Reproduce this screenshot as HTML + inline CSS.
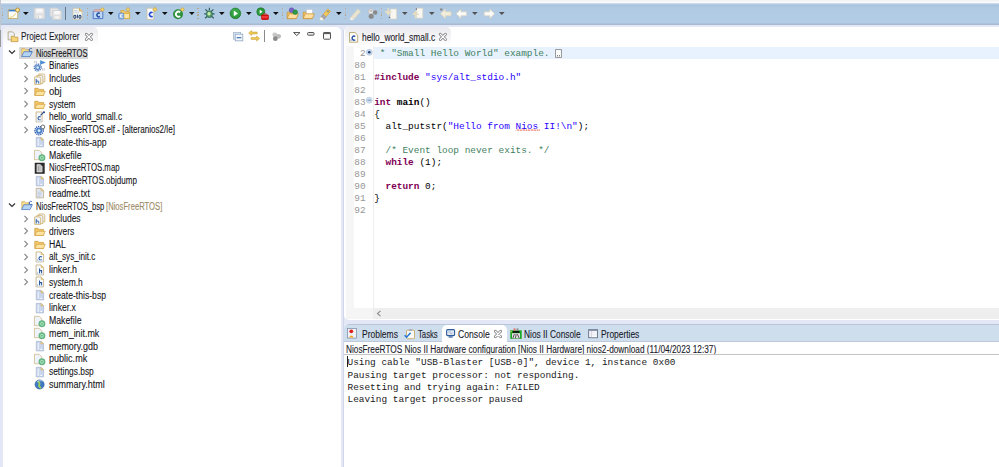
<!DOCTYPE html><html><head><meta charset="utf-8"><style>
html,body{margin:0;padding:0;}body{width:999px;height:467px;overflow:hidden;position:relative;background:#e3e7f6;font-family:"Liberation Sans", sans-serif;}
.t{position:absolute;white-space:pre;transform-origin:0 50%;-webkit-text-stroke:0.1px currentColor;font-family:"Liberation Sans", sans-serif;}
.m{position:absolute;white-space:pre;font-family:"Liberation Mono", monospace;}
.r{position:absolute;}.i{position:absolute;overflow:visible;}
</style></head><body>
<div class="r" style="left:0px;top:0px;width:999px;height:25px;background:linear-gradient(#f0f0f0 0px,#f4f5f7 1px,#fbfcfe 2.5px,#c9daec 3.5px,#aac3dd 5px,#b1cae4 8px,#b4cde7 23px,#a6b8cf 24px,#dfe4f3 25px);"></div>
<div class="r" style="left:0px;top:24px;width:999px;height:1px;background:#a9b9cf;"></div>
<div class="r" style="left:0px;top:25px;width:999px;height:2px;background:#e4e7f6;"></div>
<div class="r" style="left:1.6px;top:8.3px;width:1.2px;height:1.2px;background:#b9a17d;border-radius:1px;"></div>
<div class="r" style="left:1.6px;top:11.6px;width:1.2px;height:1.2px;background:#b9a17d;border-radius:1px;"></div>
<div class="r" style="left:1.6px;top:14.4px;width:1.2px;height:1.2px;background:#b9a17d;border-radius:1px;"></div>
<div class="r" style="left:1.6px;top:17.7px;width:1.2px;height:1.2px;background:#b9a17d;border-radius:1px;"></div>
<svg class="i" style="left:6.50px;top:7.30px" width="12.8" height="12.8" viewBox="0 0 16 16"><rect x="1.5" y="3.5" width="12" height="11" fill="#fdfdf8" stroke="#c3a65a"/><rect x="2" y="3.5" width="11" height="2" fill="#3b7fd0"/><path d="M3 13c3 0 6-2 8-5" stroke="#f0dc9a" stroke-width="1.5" fill="none"/><circle cx="13.2" cy="3.8" r="2.6" fill="#f2d57a" stroke="#b48a2c"/><circle cx="13.2" cy="3.8" r="1" fill="#fff6d0"/></svg>
<svg class="i" style="left:22.80px;top:11.8px" width="5.6" height="3" viewBox="0 0 5.6 3"><path d="M0 0h5.6L2.8 3z" fill="#101010"/></svg>
<svg class="i" style="left:32.80px;top:7.30px" width="12.8" height="12.8" viewBox="0 0 16 16"><path d="M1.5 1.5h12l1 1v12h-13z" fill="#e4e4e4" stroke="#cfcfcf"/><rect x="4" y="2" width="8" height="5" fill="#f8f8f8"/><rect x="4" y="10" width="8" height="4.5" fill="#f4f4f4" stroke="#d6d6d6" stroke-width=".8"/><rect x="6" y="11" width="1.5" height="3" fill="#d0d0d0"/></svg>
<svg class="i" style="left:49.10px;top:7.30px" width="12.8" height="12.8" viewBox="0 0 16 16"><path d="M1.5 1.5h9l1 1v9h-10z" fill="#e6e6e6" stroke="#d3d3d3"/><path d="M4.5 4.5h10l1 1v10h-11z" fill="#e4e4e4" stroke="#cfcfcf"/><rect x="6.5" y="5" width="7" height="4" fill="#f8f8f8"/><rect x="6.5" y="11" width="7" height="4" fill="#f4f4f4" stroke="#d6d6d6" stroke-width=".8"/></svg>
<div class="r" style="left:65.1px;top:7.2px;width:1.1px;height:12.4px;background:#6c7682;"></div>
<svg class="i" style="left:71.10px;top:7.30px" width="12.8" height="12.8" viewBox="0 0 16 16"><path d="M2.5 1.5h8l3.5 3.5v10.5h-11.5z" fill="#f6f6f0" stroke="#c9c1a6"/><path d="M10.5 1.5v3.5h3.5" fill="#f2cd6c" stroke="#c9a24c"/><rect x="4" y="4" width="4" height="1" fill="#b8c8e0"/><rect x="4" y="6" width="6" height="1" fill="#b8c8e0"/><path d="M4.8 10.2a1.3 2 0 1 0 .01 0M8 9.5v4.5M11.2 10.2a1.3 2 0 1 0 .01 0" fill="none" stroke="#2a4a7a" stroke-width="1.3"/></svg>
<div class="r" style="left:86.60000000000001px;top:8.3px;width:1.2px;height:1.2px;background:#b9a17d;border-radius:1px;"></div>
<div class="r" style="left:86.60000000000001px;top:11.6px;width:1.2px;height:1.2px;background:#b9a17d;border-radius:1px;"></div>
<div class="r" style="left:86.60000000000001px;top:14.4px;width:1.2px;height:1.2px;background:#b9a17d;border-radius:1px;"></div>
<div class="r" style="left:86.60000000000001px;top:17.7px;width:1.2px;height:1.2px;background:#b9a17d;border-radius:1px;"></div>
<svg class="i" style="left:91.60px;top:7.30px" width="12.8" height="12.8" viewBox="0 0 16 16"><path d="M1.5 5.5h12v9h-12z" fill="#bcd8f4" stroke="#3a62c0"/><path d="M1.5 5.5l2-2h9l1 2" fill="#f4c0b0" stroke="#c08070" stroke-width=".8"/><path d="M9.8 8.2a2.3 2.3 0 1 0 0 3.6" fill="none" stroke="#1f4aa0" stroke-width="1.8"/><path d="M13 0.5l2.5 2.5-2.5 2.5-2.5-2.5z" fill="#f2d06a" stroke="#c09a30" stroke-width=".8"/></svg>
<svg class="i" style="left:108.20px;top:11.8px" width="5.6" height="3" viewBox="0 0 5.6 3"><path d="M0 0h5.6L2.8 3z" fill="#101010"/></svg>
<svg class="i" style="left:118.30px;top:7.30px" width="12.8" height="12.8" viewBox="0 0 16 16"><path d="M3.5 4.5h4l1.5 1.5h5.5v8h-11z" fill="#f6cf6c" stroke="#d4a23a"/><path d="M3.5 8h11v6.5h-11z" fill="#ffe6a0" stroke="#d4a23a"/><rect x="0.8" y="7.5" width="6.5" height="7.5" rx="1.5" fill="#8fb4e6" stroke="#5a86c8" stroke-width=".8"/><path d="M5.5 9.6a1.7 1.7 0 1 0 0 3" fill="none" stroke="#f4f8ff" stroke-width="1.3"/><path d="M12.5 0.5l2.5 2.5-2.5 2.5-2.5-2.5z" fill="#f2d06a" stroke="#c09a30" stroke-width=".8"/></svg>
<svg class="i" style="left:134.70px;top:11.8px" width="5.6" height="3" viewBox="0 0 5.6 3"><path d="M0 0h5.6L2.8 3z" fill="#101010"/></svg>
<svg class="i" style="left:144.80px;top:7.30px" width="12.8" height="12.8" viewBox="0 0 16 16"><path d="M2.5 1.5h8.5v14h-8.5z" fill="#fbfcff" stroke="#c9bf9a"/><path d="M9.5 7.2a2.6 2.6 0 1 0 0 4.4" fill="none" stroke="#2a4ed0" stroke-width="2.1"/><path d="M12.5 0.3l2.8 2.8-2.8 2.8-2.8-2.8z" fill="#f2d06a" stroke="#c09a30" stroke-width=".8"/></svg>
<svg class="i" style="left:161.80px;top:11.8px" width="5.6" height="3" viewBox="0 0 5.6 3"><path d="M0 0h5.6L2.8 3z" fill="#101010"/></svg>
<svg class="i" style="left:171.60px;top:7.30px" width="12.8" height="12.8" viewBox="0 0 16 16"><circle cx="7.5" cy="9" r="6.2" fill="#2a8a3a"/><circle cx="7.5" cy="8.4" r="5" fill="#3aa04a" opacity=".5"/><path d="M10.2 6.6a3.2 3.2 0 1 0 0 4.8" fill="none" stroke="#ffffff" stroke-width="2.3"/><path d="M13 0.5l2.6 2.6-2.6 2.6-2.6-2.6z" fill="#f2d06a" stroke="#c09a30" stroke-width=".8"/></svg>
<svg class="i" style="left:188.60px;top:11.8px" width="5.6" height="3" viewBox="0 0 5.6 3"><path d="M0 0h5.6L2.8 3z" fill="#101010"/></svg>
<div class="r" style="left:197.4px;top:8.3px;width:1.2px;height:1.2px;background:#b9a17d;border-radius:1px;"></div>
<div class="r" style="left:197.4px;top:11.6px;width:1.2px;height:1.2px;background:#b9a17d;border-radius:1px;"></div>
<div class="r" style="left:197.4px;top:14.4px;width:1.2px;height:1.2px;background:#b9a17d;border-radius:1px;"></div>
<div class="r" style="left:197.4px;top:17.7px;width:1.2px;height:1.2px;background:#b9a17d;border-radius:1px;"></div>
<svg class="i" style="left:202.70px;top:7.30px" width="12.8" height="12.8" viewBox="0 0 16 16"><path d="M3 3l3 3M13 3l-3 3M1.5 8.5h3.5M14.5 8.5h-3.5M2.5 14l3-2.5M13.5 14l-3-2.5M8 1v3" stroke="#2f6060" stroke-width="1.5"/><ellipse cx="8" cy="9" rx="3.8" ry="4.2" fill="#5a9a6a" stroke="#2f6a5a"/><ellipse cx="7.5" cy="8.5" rx="2" ry="2.2" fill="#c8f0a8"/></svg>
<svg class="i" style="left:219.00px;top:11.8px" width="5.6" height="3" viewBox="0 0 5.6 3"><path d="M0 0h5.6L2.8 3z" fill="#101010"/></svg>
<svg class="i" style="left:229.30px;top:7.00px" width="12.8" height="12.8" viewBox="0 0 16 16"><circle cx="8" cy="8" r="6.6" fill="#2c9a3c" stroke="#237a30"/><circle cx="8" cy="7" r="5" fill="#3fb04e" opacity=".6"/><path d="M6 4.3l5.2 3.7-5.2 3.7z" fill="#ffffff"/></svg>
<svg class="i" style="left:245.70px;top:11.8px" width="5.6" height="3" viewBox="0 0 5.6 3"><path d="M0 0h5.6L2.8 3z" fill="#101010"/></svg>
<svg class="i" style="left:255.90px;top:6.90px" width="12.8" height="12.8" viewBox="0 0 16 16"><circle cx="6" cy="6" r="5" fill="#2c9a3c" stroke="#237a30"/><path d="M4.6 3.5l3.6 2.5-3.6 2.5z" fill="#fff"/><rect x="7" y="10" width="8.5" height="5.5" rx=".8" fill="#e01818" stroke="#b00"/><path d="M9.5 10v-1.5h3.5v1.5" fill="none" stroke="#c33" stroke-width="1"/><rect x="7" y="12" width="8.5" height="1" fill="#ff6a6a"/></svg>
<svg class="i" style="left:272.70px;top:11.8px" width="5.6" height="3" viewBox="0 0 5.6 3"><path d="M0 0h5.6L2.8 3z" fill="#101010"/></svg>
<div class="r" style="left:281.79999999999995px;top:8.3px;width:1.2px;height:1.2px;background:#b9a17d;border-radius:1px;"></div>
<div class="r" style="left:281.79999999999995px;top:11.6px;width:1.2px;height:1.2px;background:#b9a17d;border-radius:1px;"></div>
<div class="r" style="left:281.79999999999995px;top:14.4px;width:1.2px;height:1.2px;background:#b9a17d;border-radius:1px;"></div>
<div class="r" style="left:281.79999999999995px;top:17.7px;width:1.2px;height:1.2px;background:#b9a17d;border-radius:1px;"></div>
<svg class="i" style="left:285.60px;top:7.30px" width="12.8" height="12.8" viewBox="0 0 16 16"><path d="M1.5 6.5h4l1 1h6v7h-11z" fill="#f5c860" stroke="#c9963a"/><path d="M1.5 14.5l2.5-6h11.5l-2.5 6z" fill="#ffe0a0" stroke="#c9963a"/><circle cx="7" cy="4" r="3" fill="#7a62c8" stroke="#5a48a0" stroke-width=".6"/><circle cx="11.5" cy="6.5" r="3" fill="#2e9a48" stroke="#1f7a38" stroke-width=".6"/></svg>
<svg class="i" style="left:301.80px;top:7.30px" width="12.8" height="12.8" viewBox="0 0 16 16"><path d="M1.5 6.5h4l1 1h6v7h-11z" fill="#f5c860" stroke="#c9963a"/><rect x="5.5" y="3" width="7.5" height="6.5" fill="#ffffff" stroke="#c0c8d8" stroke-width=".8"/><path d="M1.5 14.5l2.5-6h11.5l-2.5 6z" fill="#ffe0a0" stroke="#c9963a"/></svg>
<svg class="i" style="left:318.90px;top:6.80px" width="12.8" height="12.8" viewBox="0 0 16 16"><path d="M2.5 12.5l8.5-10 3.5 3-8.5 10z" fill="#f4c85c" stroke="#cc9a34" stroke-width=".8"/><path d="M2.5 12.5l2.8-3.3 3.5 3-2.8 3.3z" fill="#a6a6b6" stroke="#8a8aa0" stroke-width=".5"/><path d="M.8 15.5l1.7-3 3.5 3-2.2 1z" fill="#ffffff" stroke="#e8d8a0" stroke-width=".5"/><circle cx="11.3" cy="5.6" r="1" fill="#3a6ab0"/></svg>
<svg class="i" style="left:335.80px;top:11.8px" width="5.6" height="3" viewBox="0 0 5.6 3"><path d="M0 0h5.6L2.8 3z" fill="#101010"/></svg>
<div class="r" style="left:344.9px;top:8.3px;width:1.2px;height:1.2px;background:#b9a17d;border-radius:1px;"></div>
<div class="r" style="left:344.9px;top:11.6px;width:1.2px;height:1.2px;background:#b9a17d;border-radius:1px;"></div>
<div class="r" style="left:344.9px;top:14.4px;width:1.2px;height:1.2px;background:#b9a17d;border-radius:1px;"></div>
<div class="r" style="left:344.9px;top:17.7px;width:1.2px;height:1.2px;background:#b9a17d;border-radius:1px;"></div>
<svg class="i" style="left:348.60px;top:6.80px" width="12.8" height="12.8" viewBox="0 0 16 16"><path d="M2.5 12.5l8.5-10 3.5 3-8.5 10z" fill="#e9e4d0" stroke="#d8d2bc" stroke-width=".8"/><path d="M.8 15.5l1.7-3 3.5 3-2.2 1z" fill="#f2efe4"/></svg>
<svg class="i" style="left:365.60px;top:7.40px" width="12.8" height="12.8" viewBox="0 0 16 16"><circle cx="6" cy="5.5" r="3.2" fill="#ececec" stroke="#b0b0b0" stroke-width=".8"/><circle cx="11.5" cy="7" r="2.8" fill="#8a8a8a"/><circle cx="6.5" cy="11.5" r="3.2" fill="#8a8a8a"/><path d="M4.5 5h3" stroke="#888" stroke-width="1"/></svg>
<div class="r" style="left:380.7px;top:8.3px;width:1.2px;height:1.2px;background:#b9a17d;border-radius:1px;"></div>
<div class="r" style="left:380.7px;top:11.6px;width:1.2px;height:1.2px;background:#b9a17d;border-radius:1px;"></div>
<div class="r" style="left:380.7px;top:14.4px;width:1.2px;height:1.2px;background:#b9a17d;border-radius:1px;"></div>
<div class="r" style="left:380.7px;top:17.7px;width:1.2px;height:1.2px;background:#b9a17d;border-radius:1px;"></div>
<svg class="i" style="left:384.80px;top:7.30px" width="12.8" height="12.8" viewBox="0 0 16 16"><path d="M6.5 2.5h8v12.5h-8z" fill="#f8f6f0" stroke="#d8d0c0" stroke-width=".8"/><path d="M4 1.5v6M1.5 6l2.5 3 2.5-3z" stroke="#e6dcc0" fill="#f4ecd4" stroke-width="2"/><circle cx="5.5" cy="13" r=".9" fill="#606070"/></svg>
<svg class="i" style="left:402.20px;top:11.8px" width="5.6" height="3" viewBox="0 0 5.6 3"><path d="M0 0h5.6L2.8 3z" fill="#505050"/></svg>
<svg class="i" style="left:411.80px;top:6.60px" width="12.8" height="12.8" viewBox="0 0 16 16"><path d="M5.5 1.5h8v12.5h-8z" fill="#f8f6f0" stroke="#d8d0c0" stroke-width=".8"/><path d="M4.5 14.5v-6M2 9l2.5-3 2.5 3z" stroke="#e6dcc0" fill="#f4ecd4" stroke-width="2"/><circle cx="5.5" cy="2.5" r=".9" fill="#606070"/></svg>
<svg class="i" style="left:429.20px;top:11.8px" width="5.6" height="3" viewBox="0 0 5.6 3"><path d="M0 0h5.6L2.8 3z" fill="#505050"/></svg>
<svg class="i" style="left:438.60px;top:6.90px" width="12.8" height="12.8" viewBox="0 0 16 16"><path d="M2 8.5l6-6v3.5h7v5h-7v3.5z" fill="#f3eedb" stroke="#dcd6c0" stroke-width="1" stroke-linejoin="round"/><circle cx="2.8" cy="3.2" r="1.6" fill="#8c8c8c"/></svg>
<svg class="i" style="left:455.40px;top:6.90px" width="12.8" height="12.8" viewBox="0 0 16 16"><path d="M1.5 8.5l6-6v3.5h7v5h-7v3.5z" fill="#fcfbf7" stroke="#d2cfc2" stroke-width="1" stroke-linejoin="round"/></svg>
<svg class="i" style="left:472.20px;top:11.8px" width="5.6" height="3" viewBox="0 0 5.6 3"><path d="M0 0h5.6L2.8 3z" fill="#505050"/></svg>
<svg class="i" style="left:482.50px;top:6.90px" width="12.8" height="12.8" viewBox="0 0 16 16"><path d="M14.5 8.5l-6-6v3.5h-7v5h7v3.5z" fill="#fcfbf7" stroke="#d2cfc2" stroke-width="1" stroke-linejoin="round"/></svg>
<svg class="i" style="left:499.30px;top:11.8px" width="5.6" height="3" viewBox="0 0 5.6 3"><path d="M0 0h5.6L2.8 3z" fill="#505050"/></svg>
<div class="r" style="left:0px;top:29.5px;width:1px;height:17.5px;background:#9a9a9a;"></div>
<div class="r" style="left:0px;top:0px;width:1px;height:25px;background:#c2c6ce;"></div>
<div class="r" style="left:0px;top:25px;width:1px;height:4.5px;background:#d0d2da;"></div>
<div class="r" style="left:3px;top:27px;width:338px;height:440px;background:#ffffff;border-top-left-radius:5px;border-top-right-radius:5px;"></div>
<div class="r" style="left:3px;top:27px;width:94.5px;height:18px;background:linear-gradient(#ebebef,#f6f6f8 60%,#fff);border-top-left-radius:5px;border-top-right-radius:5px;"></div>
<div class="t" style="left:21.00px;top:31.33px;font-size:10.0px;line-height:12px;color:#1a1a2a;transform:scaleX(0.8223);">Project Explorer</div>
<div class="r" style="left:19px;top:47px;width:69px;height:12px;background:#d9d9d9;"></div>
<svg class="i" style="left:8.0px;top:49.25px" width="8" height="6" viewBox="0 0 8 6"><path d="M1 1.5l3 3 3-3" fill="none" stroke="#333" stroke-width="1.2"/></svg>
<svg class="i" style="left:20.60px;top:47.15px" width="11.8" height="11.8" viewBox="0 0 16 16"><path d="M1 2.2h4l1.5 1.5h4.5v8h-10z" fill="#f7dc8a" stroke="#c8a050" stroke-width=".8"/><path d="M.8 13l3.2-6.6h11.4l-3.2 6.6z" fill="#b4d4f4" stroke="#4474c4" stroke-width="1"/><path d="M14.6 2.2a2.2 2.2 0 1 0 0 3.6" fill="none" stroke="#2f5fb0" stroke-width="1.3"/></svg>
<div class="t" style="left:35.60px;top:47.68px;font-size:10.0px;line-height:12px;color:#151520;transform:scaleX(0.7575);">NiosFreeRTOS</div>
<svg class="i" style="left:23.0px;top:61.885px" width="6" height="8" viewBox="0 0 6 8"><path d="M1.5 1l3 3-3 3" fill="none" stroke="#8a8a8a" stroke-width="1.1"/></svg>
<svg class="i" style="left:34.20px;top:59.88px" width="11.8" height="11.8" viewBox="0 0 16 16"><circle cx="5" cy="10.2" r="4.6" fill="none" stroke="#3565b0" stroke-width="1.8" stroke-dasharray="1.4 1.0"/><circle cx="5" cy="10.2" r="3.4" fill="#4f82c8"/><circle cx="5" cy="10.2" r="1.7" fill="#e6f4ff"/><path d="M8.6 .8l6.8 2.6-6.8 2.6z" fill="#4a8ed8" stroke="#3a78c0" stroke-width=".5"/><path d="M1 1v3.5M3.2 1v3.5M11.5 11v3.5M13.8 11v3.5" stroke="#9aa0a8" stroke-width=".8"/></svg>
<div class="t" style="left:49.20px;top:60.42px;font-size:10.0px;line-height:12px;color:#151520;transform:scaleX(0.8163);">Binaries</div>
<svg class="i" style="left:23.0px;top:74.62px" width="6" height="8" viewBox="0 0 6 8"><path d="M1.5 1l3 3-3 3" fill="none" stroke="#8a8a8a" stroke-width="1.1"/></svg>
<svg class="i" style="left:34.20px;top:72.62px" width="11.8" height="11.8" viewBox="0 0 16 16"><path d="M6.5 1.3h6a2.2 2.2 0 0 1 2.2 2.2v8.5h-8.2z" fill="#eef3fa" stroke="#c9a24c" stroke-width=".9"/><path d="M3.8 3.3h6a2.2 2.2 0 0 1 2.2 2.2v8.8h-8.2z" fill="#eef3fa" stroke="#c9a24c" stroke-width=".9"/><path d="M.8 5.3h6a2.2 2.2 0 0 1 2.2 2.2v8h-8.2z" fill="#f4f7fc" stroke="#c9a24c" stroke-width=".9"/><path d="M3 8v6.3M3 11h2.6a.8.8 0 0 1 .8.8v2.5" stroke="#2c5aa0" fill="none" stroke-width="1.3"/></svg>
<div class="t" style="left:49.20px;top:73.16px;font-size:10.0px;line-height:12px;color:#151520;transform:scaleX(0.8483);">Includes</div>
<svg class="i" style="left:23.0px;top:87.355px" width="6" height="8" viewBox="0 0 6 8"><path d="M1.5 1l3 3-3 3" fill="none" stroke="#8a8a8a" stroke-width="1.1"/></svg>
<svg class="i" style="left:34.20px;top:85.35px" width="11.8" height="11.8" viewBox="0 0 16 16"><path d="M1 4.5h4.5l1.5 1.5h6v8h-12z" fill="#f2c768" stroke="#c8963a" stroke-width=".9"/><path d="M1.2 14.2l2.6-5.7h11.5l-2.6 5.7z" fill="#fde3a0" stroke="#cf9c3e" stroke-width=".9"/></svg>
<div class="t" style="left:49.20px;top:85.89px;font-size:10.0px;line-height:12px;color:#151520;transform:scaleX(0.9506);">obj</div>
<svg class="i" style="left:23.0px;top:100.09px" width="6" height="8" viewBox="0 0 6 8"><path d="M1.5 1l3 3-3 3" fill="none" stroke="#8a8a8a" stroke-width="1.1"/></svg>
<svg class="i" style="left:34.20px;top:98.09px" width="11.8" height="11.8" viewBox="0 0 16 16"><path d="M1 4.5h4.5l1.5 1.5h6v8h-12z" fill="#f2c768" stroke="#c8963a" stroke-width=".9"/><path d="M1.2 14.2l2.6-5.7h11.5l-2.6 5.7z" fill="#fde3a0" stroke="#cf9c3e" stroke-width=".9"/></svg>
<div class="t" style="left:49.20px;top:98.62px;font-size:10.0px;line-height:12px;color:#151520;transform:scaleX(0.8399);">system</div>
<svg class="i" style="left:23.0px;top:112.825px" width="6" height="8" viewBox="0 0 6 8"><path d="M1.5 1l3 3-3 3" fill="none" stroke="#8a8a8a" stroke-width="1.1"/></svg>
<svg class="i" style="left:34.20px;top:110.82px" width="11.8" height="11.8" viewBox="0 0 16 16"><path d="M2.8 1.3h8.2v13.5h-8.2z" fill="#f6f9fe" stroke="#b89a5a" stroke-width=".9"/><path d="M9 8.2a2.2 2.2 0 1 0 0 3.4" fill="none" stroke="#2c5aa0" stroke-width="1.4"/><rect x="3.3" y="12.6" width="7.3" height="1.8" fill="#d4e4f6"/><path d="M8.8 5.8l4.5-4.3" stroke="#26488a" stroke-width="1.5"/><circle cx="13.6" cy="1.6" r="1.4" fill="#26488a"/></svg>
<div class="t" style="left:49.20px;top:111.36px;font-size:10.0px;line-height:12px;color:#151520;transform:scaleX(0.8377);">hello_world_small.c</div>
<svg class="i" style="left:23.0px;top:125.56px" width="6" height="8" viewBox="0 0 6 8"><path d="M1.5 1l3 3-3 3" fill="none" stroke="#8a8a8a" stroke-width="1.1"/></svg>
<svg class="i" style="left:34.20px;top:123.56px" width="11.8" height="11.8" viewBox="0 0 16 16"><circle cx="6.9" cy="9" r="5.6" fill="none" stroke="#2f5cae" stroke-width="2" stroke-dasharray="1.6 1.1"/><circle cx="6.9" cy="9" r="4.2" fill="#4a7ec6"/><circle cx="6.9" cy="9" r="2" fill="#dcefff"/><circle cx="12" cy="4" r="2.6" fill="#ffffff" stroke="#505050" stroke-width="1.1"/></svg>
<div class="t" style="left:49.20px;top:124.09px;font-size:10.0px;line-height:12px;color:#151520;transform:scaleX(0.8110);">NiosFreeRTOS.elf - [alteranios2/le]</div>
<svg class="i" style="left:34.20px;top:136.29px" width="11.8" height="11.8" viewBox="0 0 16 16"><path d="M3 1.8h6.5l3.5 3.5v9.5h-10z" fill="#c9d5ec" stroke="#a8b4cc" stroke-width=".9"/><rect x="5" y="4" width="1.8" height="9.5" fill="#e8eef8"/><path d="M9.5 1.8v3.5h3.5z" fill="#f0d890" stroke="#c8a860" stroke-width=".7"/><rect x="8.5" y="12" width="2.5" height="1.3" fill="#fff"/></svg>
<div class="t" style="left:49.20px;top:136.83px;font-size:10.0px;line-height:12px;color:#151520;transform:scaleX(0.8620);">create-this-app</div>
<svg class="i" style="left:34.20px;top:149.03px" width="11.8" height="11.8" viewBox="0 0 16 16"><path d="M.6 1.8h6.5l3.5 3.5v9.2h-10z" fill="#eef2fa" stroke="#c8ae74" stroke-width=".9"/><circle cx="10.8" cy="11.9" r="4.3" fill="#6cbf8a" stroke="#4ea06c" stroke-width=".7"/><circle cx="10.8" cy="11.9" r="2" fill="none" stroke="#c8eed6" stroke-width=".9"/></svg>
<div class="t" style="left:49.20px;top:149.56px;font-size:10.0px;line-height:12px;color:#151520;transform:scaleX(0.8725);">Makefile</div>
<svg class="i" style="left:34.20px;top:161.77px" width="11.8" height="11.8" viewBox="0 0 16 16"><rect x="1" y="1" width="13.5" height="15" fill="#2c2c2c"/><path d="M4 3.5h4.5l2.5 2.5v7.5h-7z" fill="#c0c0c0" stroke="#f4f4f4" stroke-width=".8"/><path d="M6 6v6" stroke="#8a8a8a" stroke-width=".8"/></svg>
<div class="t" style="left:49.20px;top:162.30px;font-size:10.0px;line-height:12px;color:#151520;transform:scaleX(0.7825);">NiosFreeRTOS.map</div>
<svg class="i" style="left:34.20px;top:174.50px" width="11.8" height="11.8" viewBox="0 0 16 16"><path d="M3 1.8h6.5l3.5 3.5v9.5h-10z" fill="#c9d5ec" stroke="#a8b4cc" stroke-width=".9"/><rect x="5" y="4" width="1.8" height="9.5" fill="#e8eef8"/><path d="M9.5 1.8v3.5h3.5z" fill="#f0d890" stroke="#c8a860" stroke-width=".7"/><rect x="8.5" y="12" width="2.5" height="1.3" fill="#fff"/></svg>
<div class="t" style="left:49.20px;top:175.03px;font-size:10.0px;line-height:12px;color:#151520;transform:scaleX(0.8055);">NiosFreeRTOS.objdump</div>
<svg class="i" style="left:34.20px;top:187.23px" width="11.8" height="11.8" viewBox="0 0 16 16"><path d="M3 1.8h6.5l3.5 3.5v9.5h-10z" fill="#dfe6f3" stroke="#b8a070" stroke-width=".9"/><path d="M9.5 1.8v3.5h3.5z" fill="#f0d890" stroke="#c8a860" stroke-width=".7"/><path d="M5 7h5M5 9h5M5 11h5M5 13h3.5" stroke="#b0bcd0" stroke-width=".8"/></svg>
<div class="t" style="left:49.20px;top:187.77px;font-size:10.0px;line-height:12px;color:#151520;transform:scaleX(0.8635);">readme.txt</div>
<svg class="i" style="left:8.0px;top:202.07px" width="8" height="6" viewBox="0 0 8 6"><path d="M1 1.5l3 3 3-3" fill="none" stroke="#333" stroke-width="1.2"/></svg>
<svg class="i" style="left:20.60px;top:199.97px" width="11.8" height="11.8" viewBox="0 0 16 16"><path d="M1 2.2h4l1.5 1.5h4.5v8h-10z" fill="#f7dc8a" stroke="#c8a050" stroke-width=".8"/><path d="M.8 13l3.2-6.6h11.4l-3.2 6.6z" fill="#b4d4f4" stroke="#4474c4" stroke-width="1"/><path d="M14.6 2.2a2.2 2.2 0 1 0 0 3.6" fill="none" stroke="#2f5fb0" stroke-width="1.3"/></svg>
<div class="t" style="left:35.60px;top:200.50px;font-size:10.0px;line-height:12px;color:#151520;transform:scaleX(0.7617);">NiosFreeRTOS_bsp</div>
<div class="t" style="left:105.50px;top:200.50px;font-size:10.0px;line-height:12px;color:#9b8a66;transform:scaleX(0.7655);">[NiosFreeRTOS]</div>
<svg class="i" style="left:23.0px;top:214.705px" width="6" height="8" viewBox="0 0 6 8"><path d="M1.5 1l3 3-3 3" fill="none" stroke="#8a8a8a" stroke-width="1.1"/></svg>
<svg class="i" style="left:34.20px;top:212.71px" width="11.8" height="11.8" viewBox="0 0 16 16"><path d="M6.5 1.3h6a2.2 2.2 0 0 1 2.2 2.2v8.5h-8.2z" fill="#eef3fa" stroke="#c9a24c" stroke-width=".9"/><path d="M3.8 3.3h6a2.2 2.2 0 0 1 2.2 2.2v8.8h-8.2z" fill="#eef3fa" stroke="#c9a24c" stroke-width=".9"/><path d="M.8 5.3h6a2.2 2.2 0 0 1 2.2 2.2v8h-8.2z" fill="#f4f7fc" stroke="#c9a24c" stroke-width=".9"/><path d="M3 8v6.3M3 11h2.6a.8.8 0 0 1 .8.8v2.5" stroke="#2c5aa0" fill="none" stroke-width="1.3"/></svg>
<div class="t" style="left:49.20px;top:213.24px;font-size:10.0px;line-height:12px;color:#151520;transform:scaleX(0.8483);">Includes</div>
<svg class="i" style="left:23.0px;top:227.44px" width="6" height="8" viewBox="0 0 6 8"><path d="M1.5 1l3 3-3 3" fill="none" stroke="#8a8a8a" stroke-width="1.1"/></svg>
<svg class="i" style="left:34.20px;top:225.44px" width="11.8" height="11.8" viewBox="0 0 16 16"><path d="M1 4.5h4.5l1.5 1.5h6v8h-12z" fill="#f2c768" stroke="#c8963a" stroke-width=".9"/><path d="M1.2 14.2l2.6-5.7h11.5l-2.6 5.7z" fill="#fde3a0" stroke="#cf9c3e" stroke-width=".9"/></svg>
<div class="t" style="left:49.20px;top:225.97px;font-size:10.0px;line-height:12px;color:#151520;transform:scaleX(0.8396);">drivers</div>
<svg class="i" style="left:23.0px;top:240.17499999999998px" width="6" height="8" viewBox="0 0 6 8"><path d="M1.5 1l3 3-3 3" fill="none" stroke="#8a8a8a" stroke-width="1.1"/></svg>
<svg class="i" style="left:34.20px;top:238.17px" width="11.8" height="11.8" viewBox="0 0 16 16"><path d="M1 4.5h4.5l1.5 1.5h6v8h-12z" fill="#f2c768" stroke="#c8963a" stroke-width=".9"/><path d="M1.2 14.2l2.6-5.7h11.5l-2.6 5.7z" fill="#fde3a0" stroke="#cf9c3e" stroke-width=".9"/></svg>
<div class="t" style="left:49.20px;top:238.71px;font-size:10.0px;line-height:12px;color:#151520;transform:scaleX(0.8636);">HAL</div>
<svg class="i" style="left:23.0px;top:252.91px" width="6" height="8" viewBox="0 0 6 8"><path d="M1.5 1l3 3-3 3" fill="none" stroke="#8a8a8a" stroke-width="1.1"/></svg>
<svg class="i" style="left:34.20px;top:250.91px" width="11.8" height="11.8" viewBox="0 0 16 16"><path d="M2.8 1.3h6.7l3.5 3.5v10h-10.2z" fill="#f6f9fe" stroke="#b89a5a" stroke-width=".9"/><path d="M9.5 1.3v3.5h3.5z" fill="#f0d890" stroke="#c8a860" stroke-width=".6"/><path d="M10.8 8.2a2.4 2.4 0 1 0 0 3.6" fill="none" stroke="#2c5aa0" stroke-width="1.5"/><rect x="4.2" y="11.8" width="1.2" height="1.2" fill="#2c5aa0"/><rect x="3.3" y="12.6" width="9.3" height="1.8" fill="#d4e4f6"/></svg>
<div class="t" style="left:49.20px;top:251.44px;font-size:10.0px;line-height:12px;color:#151520;transform:scaleX(0.8105);">alt_sys_init.c</div>
<svg class="i" style="left:23.0px;top:265.645px" width="6" height="8" viewBox="0 0 6 8"><path d="M1.5 1l3 3-3 3" fill="none" stroke="#8a8a8a" stroke-width="1.1"/></svg>
<svg class="i" style="left:34.20px;top:263.65px" width="11.8" height="11.8" viewBox="0 0 16 16"><path d="M2.8 1.3h6.7l3.5 3.5v10h-10.2z" fill="#f6f9fe" stroke="#b89a5a" stroke-width=".9"/><path d="M9.5 1.3v3.5h3.5z" fill="#f0d890" stroke="#c8a860" stroke-width=".6"/><path d="M7.5 6v7M7.5 9h2.8v4" fill="none" stroke="#2c5aa0" stroke-width="1.4"/><rect x="4.2" y="11.8" width="1.2" height="1.2" fill="#2c5aa0"/><rect x="3.3" y="12.6" width="9.3" height="1.8" fill="#d4e4f6" opacity=".7"/></svg>
<div class="t" style="left:49.20px;top:264.18px;font-size:10.0px;line-height:12px;color:#151520;transform:scaleX(0.8836);">linker.h</div>
<svg class="i" style="left:23.0px;top:278.38px" width="6" height="8" viewBox="0 0 6 8"><path d="M1.5 1l3 3-3 3" fill="none" stroke="#8a8a8a" stroke-width="1.1"/></svg>
<svg class="i" style="left:34.20px;top:276.38px" width="11.8" height="11.8" viewBox="0 0 16 16"><path d="M2.8 1.3h6.7l3.5 3.5v10h-10.2z" fill="#f6f9fe" stroke="#b89a5a" stroke-width=".9"/><path d="M9.5 1.3v3.5h3.5z" fill="#f0d890" stroke="#c8a860" stroke-width=".6"/><path d="M7.5 6v7M7.5 9h2.8v4" fill="none" stroke="#2c5aa0" stroke-width="1.4"/><rect x="4.2" y="11.8" width="1.2" height="1.2" fill="#2c5aa0"/><rect x="3.3" y="12.6" width="9.3" height="1.8" fill="#d4e4f6" opacity=".7"/></svg>
<div class="t" style="left:49.20px;top:276.92px;font-size:10.0px;line-height:12px;color:#151520;transform:scaleX(0.8447);">system.h</div>
<svg class="i" style="left:34.20px;top:289.12px" width="11.8" height="11.8" viewBox="0 0 16 16"><path d="M3 1.8h6.5l3.5 3.5v9.5h-10z" fill="#c9d5ec" stroke="#a8b4cc" stroke-width=".9"/><rect x="5" y="4" width="1.8" height="9.5" fill="#e8eef8"/><path d="M9.5 1.8v3.5h3.5z" fill="#f0d890" stroke="#c8a860" stroke-width=".7"/><rect x="8.5" y="12" width="2.5" height="1.3" fill="#fff"/></svg>
<div class="t" style="left:49.20px;top:289.65px;font-size:10.0px;line-height:12px;color:#151520;transform:scaleX(0.8618);">create-this-bsp</div>
<svg class="i" style="left:34.20px;top:301.85px" width="11.8" height="11.8" viewBox="0 0 16 16"><path d="M3 1.8h6.5l3.5 3.5v9.5h-10z" fill="#c9d5ec" stroke="#a8b4cc" stroke-width=".9"/><rect x="5" y="4" width="1.8" height="9.5" fill="#e8eef8"/><path d="M9.5 1.8v3.5h3.5z" fill="#f0d890" stroke="#c8a860" stroke-width=".7"/><rect x="8.5" y="12" width="2.5" height="1.3" fill="#fff"/></svg>
<div class="t" style="left:49.20px;top:302.38px;font-size:10.0px;line-height:12px;color:#151520;transform:scaleX(0.8643);">linker.x</div>
<svg class="i" style="left:34.20px;top:314.59px" width="11.8" height="11.8" viewBox="0 0 16 16"><path d="M.6 1.8h6.5l3.5 3.5v9.2h-10z" fill="#eef2fa" stroke="#c8ae74" stroke-width=".9"/><circle cx="10.8" cy="11.9" r="4.3" fill="#6cbf8a" stroke="#4ea06c" stroke-width=".7"/><circle cx="10.8" cy="11.9" r="2" fill="none" stroke="#c8eed6" stroke-width=".9"/></svg>
<div class="t" style="left:49.20px;top:315.12px;font-size:10.0px;line-height:12px;color:#151520;transform:scaleX(0.8725);">Makefile</div>
<svg class="i" style="left:34.20px;top:327.32px" width="11.8" height="11.8" viewBox="0 0 16 16"><path d="M.6 1.8h6.5l3.5 3.5v9.2h-10z" fill="#eef2fa" stroke="#c8ae74" stroke-width=".9"/><circle cx="10.8" cy="11.9" r="4.3" fill="#6cbf8a" stroke="#4ea06c" stroke-width=".7"/><circle cx="10.8" cy="11.9" r="2" fill="none" stroke="#c8eed6" stroke-width=".9"/></svg>
<div class="t" style="left:49.20px;top:327.85px;font-size:10.0px;line-height:12px;color:#151520;transform:scaleX(0.8873);">mem_init.mk</div>
<svg class="i" style="left:34.20px;top:340.06px" width="11.8" height="11.8" viewBox="0 0 16 16"><path d="M3 1.8h6.5l3.5 3.5v9.5h-10z" fill="#c9d5ec" stroke="#a8b4cc" stroke-width=".9"/><rect x="5" y="4" width="1.8" height="9.5" fill="#e8eef8"/><path d="M9.5 1.8v3.5h3.5z" fill="#f0d890" stroke="#c8a860" stroke-width=".7"/><rect x="8.5" y="12" width="2.5" height="1.3" fill="#fff"/></svg>
<div class="t" style="left:49.20px;top:340.59px;font-size:10.0px;line-height:12px;color:#151520;transform:scaleX(0.8916);">memory.gdb</div>
<svg class="i" style="left:34.20px;top:352.79px" width="11.8" height="11.8" viewBox="0 0 16 16"><path d="M.6 1.8h6.5l3.5 3.5v9.2h-10z" fill="#eef2fa" stroke="#c8ae74" stroke-width=".9"/><circle cx="10.8" cy="11.9" r="4.3" fill="#6cbf8a" stroke="#4ea06c" stroke-width=".7"/><circle cx="10.8" cy="11.9" r="2" fill="none" stroke="#c8eed6" stroke-width=".9"/></svg>
<div class="t" style="left:49.20px;top:353.32px;font-size:10.0px;line-height:12px;color:#151520;transform:scaleX(0.9041);">public.mk</div>
<svg class="i" style="left:34.20px;top:365.53px" width="11.8" height="11.8" viewBox="0 0 16 16"><path d="M3 1.8h6.5l3.5 3.5v9.5h-10z" fill="#c9d5ec" stroke="#a8b4cc" stroke-width=".9"/><rect x="5" y="4" width="1.8" height="9.5" fill="#e8eef8"/><path d="M9.5 1.8v3.5h3.5z" fill="#f0d890" stroke="#c8a860" stroke-width=".7"/><rect x="8.5" y="12" width="2.5" height="1.3" fill="#fff"/></svg>
<div class="t" style="left:49.20px;top:366.06px;font-size:10.0px;line-height:12px;color:#151520;transform:scaleX(0.8393);">settings.bsp</div>
<svg class="i" style="left:34.20px;top:378.26px" width="11.8" height="11.8" viewBox="0 0 16 16"><circle cx="7.6" cy="8.8" r="6.2" fill="#3f78c2" stroke="#2a5590" stroke-width=".8"/><path d="M5.2 4.5c2 1.2 2.8 3 1.8 4.8s.8 3 2.6 4.5" stroke="#9ccf5a" stroke-width="2.4" fill="none"/><path d="M4 5.5a5 4 0 0 1 7.5-1" stroke="#e8f4ff" stroke-width="1.2" fill="none" opacity=".7"/></svg>
<div class="t" style="left:49.20px;top:378.80px;font-size:10.0px;line-height:12px;color:#151520;transform:scaleX(0.8977);">summary.html</div>
<div class="r" style="left:343.3px;top:30px;width:0.9px;height:437px;background:#d2d6e8;"></div>
<div class="r" style="left:344px;top:27px;width:655px;height:293px;background:#ffffff;border-top-left-radius:5px;border-bottom-left-radius:5px;"></div>
<div class="r" style="left:344.8px;top:27px;width:106.5px;height:19px;background:linear-gradient(#ebebef,#f6f6f8 60%,#fff);border-top-left-radius:5px;border-top-right-radius:5px;"></div>
<div class="t" style="left:361.60px;top:31.54px;font-size:10.0px;line-height:12px;color:#1a1a2a;transform:scaleX(0.8388);">hello_world_small.c</div>
<div class="r" style="left:346px;top:46px;width:7.5px;height:273px;background:#f6f6f6;"></div>
<div class="r" style="left:372.5px;top:46px;width:0.8px;height:262px;background:#eeeeee;"></div>
<div class="r" style="left:374.3px;top:47px;width:625px;height:11.5px;background:#e8f2fe;"></div>
<div class="r" style="left:346px;top:308px;width:27px;height:11px;background:#f5f5f5;"></div>
<div class="r" style="left:373px;top:308px;width:626px;height:11px;background:#eeeeee;"></div>
<svg class="i" style="left:376px;top:310px" width="6" height="7" viewBox="0 0 6 7"><path d="M4.5 .8l-3 2.7 3 2.7" fill="none" stroke="#8a8a8a" stroke-width="1.1"/></svg>
<div class="m" style="left:359.94px;top:48.39px;font-size:9.43px;line-height:12px;"><span style="color:#979797;">2</span></div>
<div class="m" style="left:374.20px;top:48.39px;font-size:9.43px;line-height:12px;"><span style="color:#3f7f5f;"> * &quot;Small Hello World&quot; example. </span></div>
<div class="m" style="left:354.28px;top:60.44px;font-size:9.43px;line-height:12px;"><span style="color:#979797;">80</span></div>
<div class="m" style="left:354.28px;top:72.49px;font-size:9.43px;line-height:12px;"><span style="color:#979797;">81</span></div>
<div class="m" style="left:374.20px;top:72.49px;font-size:9.43px;line-height:12px;"><span style="color:#7f0055;font-weight:bold;">#include</span><span style="color:#000000;"> </span><span style="color:#2a00ff;">&quot;sys/alt_stdio.h&quot;</span></div>
<div class="m" style="left:354.28px;top:84.54px;font-size:9.43px;line-height:12px;"><span style="color:#979797;">82</span></div>
<div class="m" style="left:354.28px;top:96.59px;font-size:9.43px;line-height:12px;"><span style="color:#979797;">83</span></div>
<div class="m" style="left:374.20px;top:96.59px;font-size:9.43px;line-height:12px;"><span style="color:#7f0055;font-weight:bold;">int</span><span style="color:#000000;"> </span><span style="color:#000000;font-weight:bold;">main</span><span style="color:#000000;">()</span></div>
<div class="m" style="left:354.28px;top:108.64px;font-size:9.43px;line-height:12px;"><span style="color:#979797;">84</span></div>
<div class="m" style="left:374.20px;top:108.64px;font-size:9.43px;line-height:12px;"><span style="color:#000000;">{</span></div>
<div class="m" style="left:354.28px;top:120.69px;font-size:9.43px;line-height:12px;"><span style="color:#979797;">85</span></div>
<div class="m" style="left:374.20px;top:120.69px;font-size:9.43px;line-height:12px;"><span style="color:#000000;">  alt_putstr(</span><span style="color:#2a00ff;">&quot;Hello from Nios II!\n&quot;</span><span style="color:#000000;">);</span></div>
<div class="m" style="left:354.28px;top:132.74px;font-size:9.43px;line-height:12px;"><span style="color:#979797;">86</span></div>
<div class="m" style="left:354.28px;top:144.79px;font-size:9.43px;line-height:12px;"><span style="color:#979797;">87</span></div>
<div class="m" style="left:374.20px;top:144.79px;font-size:9.43px;line-height:12px;"><span style="color:#3f7f5f;">  /* Event loop never exits. */</span></div>
<div class="m" style="left:354.28px;top:156.84px;font-size:9.43px;line-height:12px;"><span style="color:#979797;">88</span></div>
<div class="m" style="left:374.20px;top:156.84px;font-size:9.43px;line-height:12px;"><span style="color:#000000;">  </span><span style="color:#7f0055;font-weight:bold;">while</span><span style="color:#000000;"> (1);</span></div>
<div class="m" style="left:354.28px;top:168.89px;font-size:9.43px;line-height:12px;"><span style="color:#979797;">89</span></div>
<div class="m" style="left:354.28px;top:180.94px;font-size:9.43px;line-height:12px;"><span style="color:#979797;">90</span></div>
<div class="m" style="left:374.20px;top:180.94px;font-size:9.43px;line-height:12px;"><span style="color:#000000;">  </span><span style="color:#7f0055;font-weight:bold;">return</span><span style="color:#000000;"> 0;</span></div>
<div class="m" style="left:354.28px;top:192.99px;font-size:9.43px;line-height:12px;"><span style="color:#979797;">91</span></div>
<div class="m" style="left:374.20px;top:192.99px;font-size:9.43px;line-height:12px;"><span style="color:#000000;">}</span></div>
<div class="m" style="left:354.28px;top:205.04px;font-size:9.43px;line-height:12px;"><span style="color:#979797;">92</span></div>
<div class="r" style="left:344px;top:324px;width:655px;height:143px;background:#ffffff;border-top-left-radius:5px;"></div>
<div class="r" style="left:344px;top:324px;width:655px;height:18px;background:#cfdeed;border-top-left-radius:5px;"></div>
<div class="r" style="left:348px;top:324px;width:651px;height:0.9px;background:#b9c6d8;"></div>
<div class="r" style="left:344px;top:341.2px;width:655px;height:0.9px;background:#bccadc;"></div>
<div class="r" style="left:442px;top:324.8px;width:65px;height:17.5px;background:#ffffff;border-top-left-radius:5px;border-top-right-radius:5px;"></div>
<div class="t" style="left:361.60px;top:328.54px;font-size:10.0px;line-height:12px;color:#1a1a2a;transform:scaleX(0.8497);">Problems</div>
<div class="t" style="left:418.00px;top:328.54px;font-size:10.0px;line-height:12px;color:#1a1a2a;transform:scaleX(0.7707);">Tasks</div>
<div class="t" style="left:457.80px;top:328.54px;font-size:10.0px;line-height:12px;color:#1a1a2a;transform:scaleX(0.8637);">Console</div>
<div class="t" style="left:524.00px;top:328.54px;font-size:10.0px;line-height:12px;color:#1a1a2a;transform:scaleX(0.8347);">Nios II Console</div>
<div class="t" style="left:600.90px;top:328.54px;font-size:10.0px;line-height:12px;color:#1a1a2a;transform:scaleX(0.8403);">Properties</div>
<div class="t" style="left:346.00px;top:344.33px;font-size:10.0px;line-height:12px;color:#1a1a2a;transform:scaleX(0.8273);">NiosFreeRTOS Nios II Hardware configuration [Nios II Hardware] nios2-download (11/04/2023 12:37)</div>
<div class="r" style="left:344px;top:354.2px;width:655px;height:0.9px;background:#c4c4c4;"></div>
<div class="m" style="left:347.50px;top:357.39px;font-size:9.44px;line-height:12px;"><span style="color:#1a1a1a;">Using cable &quot;USB-Blaster [USB-0]&quot;, device 1, instance 0x00</span></div>
<div class="m" style="left:347.50px;top:369.59px;font-size:9.44px;line-height:12px;"><span style="color:#1a1a1a;">Pausing target processor: not responding.</span></div>
<div class="m" style="left:347.50px;top:381.79px;font-size:9.44px;line-height:12px;"><span style="color:#1a1a1a;">Resetting and trying again: FAILED</span></div>
<div class="m" style="left:347.50px;top:393.99px;font-size:9.44px;line-height:12px;"><span style="color:#1a1a1a;">Leaving target processor paused</span></div>
<div class="r" style="left:347.3px;top:356.4px;width:0.9px;height:11px;background:#222;"></div>
<svg class="i" style="left:6.50px;top:30.80px" width="12" height="11.5" viewBox="0 0 13 13"><path d="M1 1h5l2 2v7h-7z" fill="#eef2f8" stroke="#a89c78" stroke-width=".9"/><path d="M4.5 6h3l1 1h3.5v5h-7.5z" fill="#f6d67a" stroke="#c8963a" stroke-width=".9"/></svg>
<svg class="i" style="left:84.50px;top:32.90px" width="7.8" height="7.8" viewBox="0 0 8 8"><path d="M1.3 1.3l5.4 5.4M6.7 1.3l-5.4 5.4" stroke="#6a6a6a" stroke-width="2.7" stroke-linecap="round"/><path d="M1.3 1.3l5.4 5.4M6.7 1.3l-5.4 5.4" stroke="#ffffff" stroke-width="1.4" stroke-linecap="round"/></svg>
<svg class="i" style="left:233.00px;top:31.60px" width="10.5" height="9.5" viewBox="0 0 11 10"><rect x=".5" y=".5" width="7.5" height="7" fill="#dfe9f5" stroke="#9fb4cc" stroke-width=".8"/><rect x="2.3" y="2.3" width="8" height="7" fill="#f4f8fd" stroke="#8aa2c0" stroke-width=".8"/><path d="M3.8 6h5" stroke="#3a6aa8" stroke-width="1.2"/></svg>
<svg class="i" style="left:247.80px;top:30.00px" width="12.3" height="12" viewBox="0 0 12 12"><path d="M.5 3l3-2.5v1.6h5.5v1.8h-5.5v1.6z" fill="#f2cc5a" stroke="#c9a03a" stroke-width=".6"/><path d="M11.5 8.5l-3 2.5v-1.6h-5.5v-1.8h5.5v-1.6z" fill="#f2cc5a" stroke="#c9a03a" stroke-width=".6"/></svg>
<div class="r" style="left:263.8px;top:30px;width:1px;height:12px;background:#8a8a8a;"></div>
<svg class="i" style="left:271.50px;top:31.80px" width="9.5" height="9.5" viewBox="0 0 10 10"><circle cx="3" cy="3" r="2.6" fill="#c8c8c8"/><circle cx="7" cy="4.5" r="2.5" fill="#bcbcbc"/><circle cx="3.5" cy="7" r="2.5" fill="#8a8a8a"/></svg>
<svg class="i" style="left:292.70px;top:32.10px" width="7.5" height="4.2" viewBox="0 0 7.5 4.2"><path d="M.6 .6h6.3L3.75 3.6z" fill="#fff" stroke="#4a4a4a" stroke-width="1"/></svg>
<svg class="i" style="left:306.80px;top:32.10px" width="7.6" height="3.7" viewBox="0 0 7.6 3.7"><rect x=".5" y=".5" width="6.6" height="2.7" rx="1" fill="#e8e8e8" stroke="#4f4f4f" stroke-width="1"/></svg>
<svg class="i" style="left:322.90px;top:32.10px" width="8" height="7.7" viewBox="0 0 8 7.7"><rect x=".5" y=".5" width="7" height="6.7" rx=".8" fill="#fafafa" stroke="#4f4f4f" stroke-width="1"/><rect x=".5" y=".5" width="7" height="1.6" fill="#5a5a5a"/></svg>
<svg class="i" style="left:348.90px;top:31.70px" width="9.2" height="10.4" viewBox="0 0 9.2 10.4"><path d="M.5 .5h5.5l2.7 2.7v7h-8.2z" fill="#fdfcf6" stroke="#b8a66a" stroke-width=".9"/><path d="M6.3 4.5a2 2 0 1 0 0 3.2" fill="none" stroke="#2a52a8" stroke-width="1.4"/><rect x="1.6" y="7.6" width="1" height="1" fill="#2a52a8"/></svg>
<svg class="i" style="left:438.90px;top:33.30px" width="7.8" height="7.8" viewBox="0 0 8 8"><path d="M1.3 1.3l5.4 5.4M6.7 1.3l-5.4 5.4" stroke="#6a6a6a" stroke-width="2.7" stroke-linecap="round"/><path d="M1.3 1.3l5.4 5.4M6.7 1.3l-5.4 5.4" stroke="#ffffff" stroke-width="1.4" stroke-linecap="round"/></svg>
<svg class="i" style="left:365.70px;top:48.50px" width="6.6" height="6.6" viewBox="0 0 6.6 6.6"><circle cx="3.3" cy="3.3" r="3" fill="#c9dcf0" stroke="#a8c0dc" stroke-width=".6"/><circle cx="3.3" cy="3.3" r="1.3" fill="#283c70"/></svg>
<svg class="i" style="left:365.80px;top:96.80px" width="6.4" height="6.4" viewBox="0 0 6.4 6.4"><circle cx="3.2" cy="3.2" r="3" fill="#d0e0f2" stroke="#b0c6de" stroke-width=".6"/><path d="M1.5 3.2h3.4" stroke="#7a90b0" stroke-width="1"/></svg>
<svg class="i" style="left:555.20px;top:49.00px" width="7" height="9" viewBox="0 0 7 9"><rect x=".6" y=".6" width="5.8" height="7.8" fill="#fff" stroke="#8c8c8c" stroke-width=".9"/><rect x="2" y="6.3" width="1" height="1" fill="#555"/><rect x="4" y="6.3" width="1" height="1" fill="#555"/></svg>
<svg class="i" style="left:516.00px;top:128.70px" width="24" height="2.2" viewBox="0 0 24 2.2"><path d="M0 1.6l1-1 1 1 1-1 1 1 1-1 1 1 1-1 1 1 1-1 1 1 1-1 1 1 1-1 1 1 1-1 1 1 1-1 1 1 1-1 1 1 1-1 1 1 1-1 1 1" fill="none" stroke="#e8604e" stroke-width=".85"/></svg>
<svg class="i" style="left:347.10px;top:328.10px" width="10" height="10.6" viewBox="0 0 10 10.6"><rect x=".5" y=".5" width="9" height="9.6" fill="#eef3fa" stroke="#8892a8" stroke-width=".8"/><circle cx="4.3" cy="3.3" r="1.9" fill="#e0201c"/><path d="M2.3 9.4a2 2 0 0 1 4 0z" fill="#f5a623"/></svg>
<svg class="i" style="left:403.70px;top:328.50px" width="11" height="10.2" viewBox="0 0 11 10.2"><rect x="2.5" y="1.2" width="8" height="8.5" rx=".8" fill="#fbfaf6" stroke="#c8a868" stroke-width=".9"/><rect x="4.8" y=".3" width="3.4" height="1.6" fill="#a0a8b8"/><path d="M.6 6.2l2 2 4-4.5" fill="none" stroke="#1f78d8" stroke-width="1.5"/></svg>
<svg class="i" style="left:445.90px;top:329.10px" width="9.2" height="8.7" viewBox="0 0 9.2 8.7"><rect x=".6" y=".6" width="8" height="6" rx="1" fill="#dfe6ef" stroke="#2d5b9c" stroke-width="1.1"/><path d="M2.2 3h2.6M4.2 4.4h2.2" stroke="#8aa0c0" stroke-width=".6"/><rect x="2.6" y="7.4" width="4" height="1.2" fill="#2d5b9c"/></svg>
<svg class="i" style="left:493.80px;top:329.80px" width="8" height="8" viewBox="0 0 8 8"><path d="M1.3 1.3l5.4 5.4M6.7 1.3l-5.4 5.4" stroke="#6a6a6a" stroke-width="2.7" stroke-linecap="round"/><path d="M1.3 1.3l5.4 5.4M6.7 1.3l-5.4 5.4" stroke="#ffffff" stroke-width="1.4" stroke-linecap="round"/></svg>
<svg class="i" style="left:509.80px;top:327.80px" width="12" height="11.2" viewBox="0 0 12 11.2"><rect x=".3" y="2.3" width="11.4" height="8.6" fill="#1aa822"/><rect x="2" y="5.2" width="8" height="5.2" fill="#e6e0e6"/><rect x="2.6" y="3.2" width="6.8" height="1.6" fill="#050505"/><rect x="3.6" y=".4" width="1.8" height="2.6" fill="#e06a6a"/><rect x="6.6" y=".4" width="1.8" height="2.6" fill="#8a8a8a"/><path d="M2.8 10.3l1.6-4.2M5.4 10.3l.8-4.2M7.4 6.1l1.8 4.2" fill="none" stroke="#444" stroke-width=".9"/><rect x=".8" y="3.2" width="1" height="1" fill="#f0e040"/></svg>
<svg class="i" style="left:587.90px;top:328.90px" width="10.1" height="9.3" viewBox="0 0 10.1 9.3"><rect x=".6" y=".6" width="8.9" height="8.1" fill="#f2f3f6" stroke="#707c94" stroke-width="1"/><rect x=".6" y=".6" width="8.9" height="1.3" fill="#8490a8"/><path d="M3.6 2v6.4" stroke="#c8ccd4" stroke-width=".8"/><path d="M4 7.6h5" stroke="#fff" stroke-width=".8"/></svg>
</body></html>
